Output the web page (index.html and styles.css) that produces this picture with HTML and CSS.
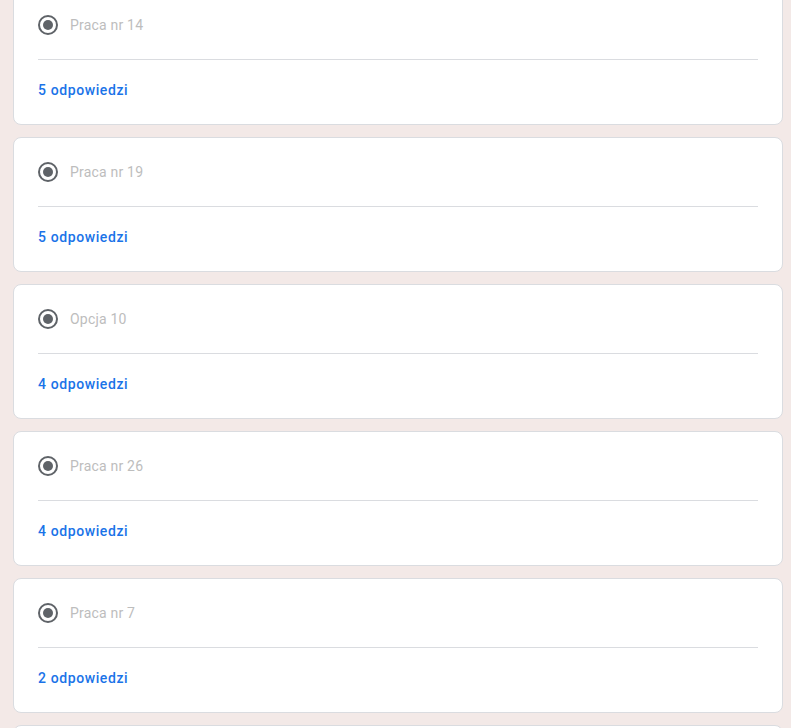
FILE: index.html
```html
<!DOCTYPE html>
<html lang="pl">
<head>
  <meta charset="UTF-8" />
  <meta name="viewport" content="width=device-width, initial-scale=1.0"/>
  <title>Odpowiedzi</title>
  <link rel="stylesheet" href="styles.css">
</head>
<body>
  <div class="answers">
    <div class="card">
      <div class="option">
        <svg class="radio" width="20" height="20" viewBox="0 0 20 20"><circle cx="10" cy="10" r="9" fill="none" stroke="#5f6368" stroke-width="2"/><circle cx="10" cy="10" r="5" fill="#5f6368"/></svg>
        <span class="label">Praca nr 14</span>
      </div>
      <hr class="divider">
      <a class="count" href="#">5 odpowiedzi</a>
    </div>

    <div class="card">
      <div class="option">
        <svg class="radio" width="20" height="20" viewBox="0 0 20 20"><circle cx="10" cy="10" r="9" fill="none" stroke="#5f6368" stroke-width="2"/><circle cx="10" cy="10" r="5" fill="#5f6368"/></svg>
        <span class="label">Praca nr 19</span>
      </div>
      <hr class="divider">
      <a class="count" href="#">5 odpowiedzi</a>
    </div>

    <div class="card">
      <div class="option">
        <svg class="radio" width="20" height="20" viewBox="0 0 20 20"><circle cx="10" cy="10" r="9" fill="none" stroke="#5f6368" stroke-width="2"/><circle cx="10" cy="10" r="5" fill="#5f6368"/></svg>
        <span class="label">Opcja 10</span>
      </div>
      <hr class="divider">
      <a class="count" href="#">4 odpowiedzi</a>
    </div>

    <div class="card">
      <div class="option">
        <svg class="radio" width="20" height="20" viewBox="0 0 20 20"><circle cx="10" cy="10" r="9" fill="none" stroke="#5f6368" stroke-width="2"/><circle cx="10" cy="10" r="5" fill="#5f6368"/></svg>
        <span class="label">Praca nr 26</span>
      </div>
      <hr class="divider">
      <a class="count" href="#">4 odpowiedzi</a>
    </div>

    <div class="card">
      <div class="option">
        <svg class="radio" width="20" height="20" viewBox="0 0 20 20"><circle cx="10" cy="10" r="9" fill="none" stroke="#5f6368" stroke-width="2"/><circle cx="10" cy="10" r="5" fill="#5f6368"/></svg>
        <span class="label">Praca nr 7</span>
      </div>
      <hr class="divider">
      <a class="count" href="#">2 odpowiedzi</a>
    </div>

    <!-- next card, only its top edge is in view -->
    <div class="card"></div>
  </div>
</body>
</html>
```

FILE: styles.css
```css
body {
  margin: 0;
  background-color: #f3e9e7;
  font-family: Roboto, "Liberation Sans", Arial, sans-serif;
  overflow: hidden;
}
.answers {
  display: flex;
  flex-direction: column;
  gap: 12px;
  width: 770px;
  margin-top: -10px;
  margin-left: 13px;
}
.card {
  background: white;
  border: 1px solid #dadce0;
  border-radius: 8px;
  padding: 10px 24px 24px;
  box-sizing: border-box;
  height: 135px;
  flex: none;
}
.option {
  display: flex;
  align-items: center;
  height: 48px;
}
.radio {
  flex: none;
  margin-right: 12px;
}
.label {
  font-size: 14px;
  color: #bdbdbd;
  letter-spacing: .2px;
}
.divider {
  border: 0;
  border-top: 1px solid #dadce0;
  margin: 10px 0 0;
}
.count {
  display: block;
  margin-top: 20px;
  line-height: 20px;
  font-size: 14px;
  font-weight: 500;
  letter-spacing: .6px;
  color: #1a73e8;
  text-decoration: none;
}
```
